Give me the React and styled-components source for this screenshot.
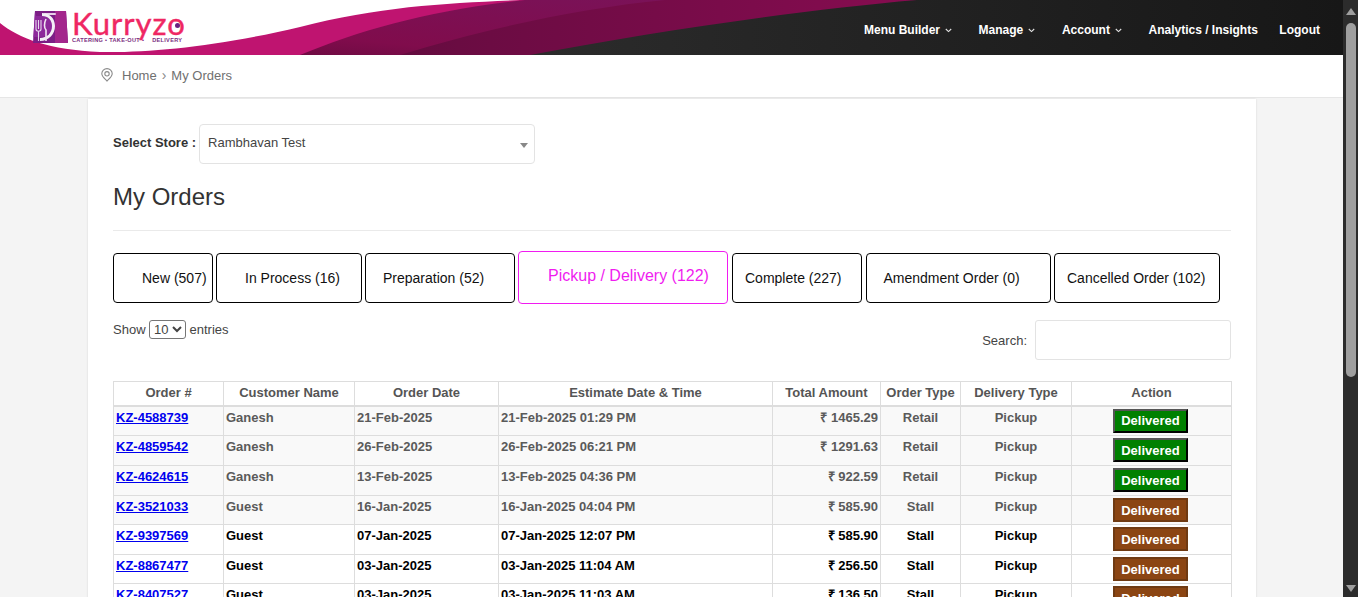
import React from 'react';
import styled, { createGlobalStyle } from 'styled-components';

const GlobalStyle = createGlobalStyle`
    html, body {
        margin: 0;
        padding: 0;
        height: 597px;
        overflow: hidden;
        font-family: "Liberation Sans", Arial, sans-serif;
        font-size: 13px;
        color: #333;
    }
    * {
        box-sizing: border-box;
    }
`;

const TABS = [
    { label: 'New (507)', width: 99.5, left: 28 },
    { label: 'In Process (16)', width: 145.5, left: 28 },
    { label: 'Preparation (52)', width: 149.5, left: 17 },
    { label: 'Pickup / Delivery (122)', width: 210, left: 29, active: true },
    { label: 'Complete (227)', width: 130.5, left: 12.5 },
    { label: 'Amendment Order (0)', width: 185, left: 17 },
    { label: 'Cancelled Order (102)', width: 166, left: 12 },
];

const COLUMNS = [110, 131, 144, 274, 108, 80, 111, 160];

const ORDERS = [
    { id: 'KZ-4588739', name: 'Ganesh', date: '21-Feb-2025', est: '21-Feb-2025 01:29 PM', amount: '₹ 1465.29', type: 'Retail', tone: 'green', seen: true, height: 30 },
    { id: 'KZ-4859542', name: 'Ganesh', date: '26-Feb-2025', est: '26-Feb-2025 06:21 PM', amount: '₹ 1291.63', type: 'Retail', tone: 'green', seen: true, height: 30 },
    { id: 'KZ-4624615', name: 'Ganesh', date: '13-Feb-2025', est: '13-Feb-2025 04:36 PM', amount: '₹ 922.59', type: 'Retail', tone: 'green', seen: true, height: 30 },
    { id: 'KZ-3521033', name: 'Guest', date: '16-Jan-2025', est: '16-Jan-2025 04:04 PM', amount: '₹ 585.90', type: 'Stall', tone: 'brown', seen: true, height: 29 },
    { id: 'KZ-9397569', name: 'Guest', date: '07-Jan-2025', est: '07-Jan-2025 12:07 PM', amount: '₹ 585.90', type: 'Stall', tone: 'brown', height: 30 },
    { id: 'KZ-8867477', name: 'Guest', date: '03-Jan-2025', est: '03-Jan-2025 11:04 AM', amount: '₹ 256.50', type: 'Stall', tone: 'brown', height: 29 },
    { id: 'KZ-8407527', name: 'Guest', date: '03-Jan-2025', est: '03-Jan-2025 11:03 AM', amount: '₹ 136.50', type: 'Stall', tone: 'brown', height: 30 },
];

function HeaderWave() {
    return (
        <WaveSvg viewBox="0 0 1343 55" preserveAspectRatio="none">
            <defs>
                <linearGradient id="darkBase" x1="0" x2="1" y1="0" y2="0">
                    <stop offset="0.35" stopColor="#2d2d2d" />
                    <stop offset="1" stopColor="#171717" />
                </linearGradient>
                <linearGradient id="plumLayer" x1="0" x2="1" y1="0" y2="0">
                    <stop offset="0" stopColor="#380828" />
                    <stop offset="0.5" stopColor="#6a0c42" />
                    <stop offset="1" stopColor="#860c50" />
                </linearGradient>
                <linearGradient id="wineLayer" x1="0" x2="1" y1="1" y2="0">
                    <stop offset="0" stopColor="#5a0a38" />
                    <stop offset="0.4" stopColor="#800c4c" />
                    <stop offset="1" stopColor="#7a1258" />
                </linearGradient>
            </defs>
            <rect width="1343" height="55" fill="url(#darkBase)" />
            <path d="M0,0 H917 C800,10 650,32 530,55 H0 Z" fill="url(#plumLayer)" />
            <path d="M0,0 H665 C580,8 480,30 400,55 H0 Z" fill="url(#wineLayer)" />
            <path d="M0,0 H525 C430,10 360,30 300,55 H0 Z" fill="#bf1470" />
            <path d="M0,0 H520 C450,3 380,6 300,27 C220,46 150,53 100,52 C50,50 18,38 0,23 Z" fill="#ffffff" />
        </WaveSvg>
    );
}

function BagIcon() {
    return (
        <svg width="35" height="33" viewBox="0 0 35 33">
            <path d="M2,1 H33 L35,33 H0 Z" fill="#7c1e86" />
            <path d="M22,1 H33 L35,33 H22 Z" fill="#a3268c" />
            <rect x="11" y="3" width="12" height="2" rx="1" fill="#e8cfe8" />
            <path d="M0,33 V27 H7 C15,27 19,21 19,16 C19,10 15,6 9,6 H3 L2,1 Z" fill="#8d2a9b" />
            <path d="M9,6 C15,6 19,10 19,16 C19,23 14,28 7,28 V31 C16,31 22,24 22,16 C22,8 16,3 9,3 Z" fill="#f4f0f6" />
            <path d="M3,10 V19 M5.5,10 V19 M8,10 V19 M3,19 C3,22 8,22 8,19 M5.5,21 V31" stroke="#e7d9ee" strokeWidth="1.1" fill="none" />
            <path d="M13,9 C11,13 11,18 13,20 V31" stroke="#f0e4f2" strokeWidth="1.6" fill="none" />
        </svg>
    );
}

function PinIcon() {
    return (
        <PinSvg width="12" height="14" viewBox="0 0 12 14" fill="none" stroke="#8a8a8a" strokeWidth="1.1">
            <path d="M6,13 C3.6,10.6 0.8,8.6 0.8,5.8 A5.2,5.2 0 0 1 11.2,5.8 C11.2,8.6 8.4,10.6 6,13 Z" />
            <circle cx="6" cy="5.8" r="2.2" />
        </PinSvg>
    );
}

function Chevron() {
    return (
        <ChevronSvg width="7" height="5" viewBox="0 0 7 5" fill="none" stroke="#e4e4e4" strokeWidth="1.1">
            <path d="M0.8,1 L3.5,3.6 L6.2,1" />
        </ChevronSvg>
    );
}

export default function App() {
    return (
        <Root>
            <GlobalStyle />
            <Page>
                <Header>
                    <HeaderWave />
                    <Logo>
                        <BagIcon />
                        <LogoWords>
                            <LogoName>Kurryzo</LogoName>
                            <LogoTag>
                                CATERING • TAKE-OUT •
                                <LogoTagEnd>DELIVERY</LogoTagEnd>
                            </LogoTag>
                        </LogoWords>
                    </Logo>
                    <Nav>
                        <NavItem>Menu Builder<Chevron /></NavItem>
                        <NavItem>Manage<Chevron /></NavItem>
                        <NavItem>Account<Chevron /></NavItem>
                        <NavItem>Analytics / Insights</NavItem>
                        <NavItem $last>Logout</NavItem>
                    </Nav>
                </Header>

                <Breadcrumb>
                    <PinIcon />
                    <Crumb>Home</Crumb>
                    <CrumbSep>›</CrumbSep>
                    <Crumb>My Orders</Crumb>
                </Breadcrumb>

                <Card>
                    <StoreRow>
                        <StoreLabel>Select Store :</StoreLabel>
                        <StoreSelect>Rambhavan Test</StoreSelect>
                    </StoreRow>

                    <Title>My Orders</Title>

                    <TabRow>
                        {TABS.map((tab) => (
                            <Tab key={tab.label} $width={tab.width} $left={tab.left} $active={tab.active}>
                                {tab.label}
                            </Tab>
                        ))}
                    </TabRow>

                    <Controls>
                        <ShowEntries>
                            Show
                            <EntriesSelect defaultValue="10">
                                <option value="10">10</option>
                                <option value="25">25</option>
                                <option value="50">50</option>
                            </EntriesSelect>
                            entries
                        </ShowEntries>
                        <SearchBox>
                            Search:
                            <SearchInput type="text" />
                        </SearchBox>
                    </Controls>

                    <OrdersTable>
                        <colgroup>
                            {COLUMNS.map((w, key) => <col key={key} width={w} />)}
                        </colgroup>
                        <thead>
                            <tr>
                                <HeadCell>Order #</HeadCell>
                                <HeadCell>Customer Name</HeadCell>
                                <HeadCell>Order Date</HeadCell>
                                <HeadCell>Estimate Date &amp; Time</HeadCell>
                                <HeadCell>Total Amount</HeadCell>
                                <HeadCell>Order Type</HeadCell>
                                <HeadCell>Delivery Type</HeadCell>
                                <HeadCell>Action</HeadCell>
                            </tr>
                        </thead>
                        <tbody>
                            {ORDERS.map((el) => (
                                <OrderRow key={el.id} $seen={el.seen} $height={el.height}>
                                    <Cell><OrderLink href="#">{el.id}</OrderLink></Cell>
                                    <Cell>{el.name}</Cell>
                                    <Cell>{el.date}</Cell>
                                    <Cell>{el.est}</Cell>
                                    <Cell $align="right">{el.amount}</Cell>
                                    <Cell $align="center">{el.type}</Cell>
                                    <Cell $align="center">Pickup</Cell>
                                    <Cell $align="center">
                                        <StatusButton $tone={el.tone}>Delivered</StatusButton>
                                    </Cell>
                                </OrderRow>
                            ))}
                        </tbody>
                    </OrdersTable>
                </Card>
            </Page>

            <ScrollTrack>
                <ScrollArrow viewBox="0 0 10 8"><path d="M5,0 L10,7 H0 Z" fill="#9f9f9f" /></ScrollArrow>
                <ScrollThumb />
                <ScrollArrow $bottom viewBox="0 0 10 8"><path d="M0,0 H10 L5,7 Z" fill="#9f9f9f" /></ScrollArrow>
            </ScrollTrack>
        </Root>
    );
}

const Root = styled.div`
    display: flex;
    width: 1358px;
    height: 597px;
    overflow: hidden;
`;
const Page = styled.div`
    flex: 1;
    min-width: 0;
    height: 597px;
    overflow: hidden;
    background: #f4f4f4;
`;

// 상단 헤더
const Header = styled.header`
    position: relative;
    display: flex;
    align-items: flex-start;
    justify-content: space-between;
    height: 55px;
    padding: 10px 23px 0 33px;
`;
const WaveSvg = styled.svg`
    position: absolute;
    top: 0;
    left: 0;
    width: 100%;
    height: 55px;
`;
const Logo = styled.div`
    position: relative;
    display: flex;
    gap: 4px;
`;
const LogoWords = styled.div`
    display: flex;
    flex-direction: column;
`;
const LogoName = styled.span`
    position: relative;
    height: 27px;
    font-family: "Lato", sans-serif;
    font-size: 31px;
    line-height: 27px;
    letter-spacing: 1px;
    -webkit-text-stroke: 0.4px #ef2763;
    color: #ef2763;
    &::after {
        content: '';
        position: absolute;
        right: 6px;
        top: 13px;
        width: 5px;
        height: 5px;
        border-radius: 50%;
        background: #6a2180;
    }
`;
const LogoTag = styled.span`
    font-size: 5.6px;
    font-weight: bold;
    line-height: 6px;
    white-space: nowrap;
    letter-spacing: 0.3px;
    color: #7b2d80;
`;
const LogoTagEnd = styled.span`
    margin-left: 8px;
`;
const Nav = styled.nav`
    position: relative;
    display: flex;
    align-items: center;
    height: 39px;
`;
const NavItem = styled.a`
    display: flex;
    align-items: center;
    margin-right: ${(props) => (props.$last ? '0' : '26.6px')};
    font-size: 12px;
    font-weight: bold;
    color: #fff;
    cursor: pointer;
    &:nth-child(4) {
        margin-right: 21.5px;
    }
`;
const ChevronSvg = styled.svg`
    margin-left: 5px;
    margin-top: 1px;
`;

// 브레드크럼
const Breadcrumb = styled.div`
    display: flex;
    align-items: center;
    height: 43px;
    padding: 0 0 2px 101px;
    background: #fff;
    border-bottom: 1px solid #e6e6e6;
    color: #777;
`;
const PinSvg = styled.svg`
    margin-right: 9px;
`;
const Crumb = styled.span`
    font-size: 13px;
    color: #707070;
`;
const CrumbSep = styled.span`
    margin: 0 5px;
    font-size: 14px;
    color: #888;
`;

// 본문 카드
const Card = styled.main`
    width: 1168px;
    height: 520px;
    margin: 1px 0 0 88px;
    padding: 25px 25px 0;
    background: #fff;
    box-shadow: 0 0 2px rgba(0, 0, 0, 0.12);
`;
const StoreRow = styled.div`
    display: flex;
    align-items: center;
    gap: 3px;
`;
const StoreLabel = styled.label`
    margin-bottom: 4px;
    font-size: 13px;
    font-weight: bold;
    color: #333;
`;
const StoreSelect = styled.div`
    position: relative;
    width: 336px;
    height: 40px;
    padding: 10px 8px;
    border: 1px solid #e3e3e3;
    border-radius: 4px;
    font-size: 13px;
    line-height: 16px;
    color: #444;
    &::after {
        content: '';
        position: absolute;
        right: 6px;
        top: 18px;
        border-left: 4px solid transparent;
        border-right: 4px solid transparent;
        border-top: 5px solid #888;
    }
`;
const Title = styled.h2`
    margin: 19px 0 0;
    height: 48px;
    padding-top: 0;
    border-bottom: 1px solid #eaeaea;
    font-size: 24px;
    font-weight: normal;
    line-height: 28px;
    color: #333;
`;
const TabRow = styled.div`
    display: flex;
    align-items: center;
    gap: 3.5px;
    height: 53px;
    margin-top: 20px;
`;
const Tab = styled.button`
    width: ${(props) => props.$width}px;
    height: ${(props) => (props.$active ? '53px' : '50px')};
    padding: 0 0 ${(props) => (props.$active ? '3px' : '0')} ${(props) => props.$left}px;
    border: 1px solid ${(props) => (props.$active ? '#f01cf0' : '#000')};
    border-radius: 4px;
    background: #fff;
    font-family: inherit;
    font-size: ${(props) => (props.$active ? '16px' : '14px')};
    text-align: left;
    white-space: nowrap;
    color: ${(props) => (props.$active ? '#f01cf0' : '#111')};
`;
const Controls = styled.div`
    display: flex;
    align-items: flex-start;
    justify-content: space-between;
    margin-top: 16px;
    height: 61px;
`;
const ShowEntries = styled.label`
    display: flex;
    align-items: center;
    gap: 3.5px;
    height: 19px;
    font-size: 13px;
    color: #444;
`;
const EntriesSelect = styled.select`
    width: 37px;
    height: 19px;
    padding: 0;
    border: 1px solid #767676;
    border-radius: 3px;
    background: #fff;
    font-family: inherit;
    font-size: 13px;
    color: #444;
`;
const SearchBox = styled.label`
    display: flex;
    align-items: center;
    gap: 8px;
    font-size: 13px;
    color: #444;
`;
const SearchInput = styled.input`
    width: 196px;
    height: 40px;
    border: 1px solid #e3e3e3;
    border-radius: 3px;
    background: #fff;
`;

// 주문 테이블
const OrdersTable = styled.table`
    width: 1118px;
    table-layout: fixed;
    border-collapse: collapse;
    border: 1px solid #ddd;
`;
const HeadCell = styled.th`
    height: 24px;
    padding: 0 2px 2px;
    border: 1px solid #ddd;
    border-bottom: 2px solid #ddd;
    font-size: 13px;
    font-weight: bold;
    white-space: nowrap;
    color: #555;
`;
const OrderRow = styled.tr`
    height: ${(props) => props.$height}px;
    background: ${(props) => (props.$seen ? '#f9f9f9' : '#fff')};
    color: ${(props) => (props.$seen ? '#5a5a5a' : '#000')};
`;
const Cell = styled.td`
    padding: 2px 2px 0;
    border: 1px solid #ddd;
    font-size: 13px;
    font-weight: bold;
    line-height: 18px;
    vertical-align: top;
    white-space: nowrap;
    text-align: ${(props) => props.$align || 'left'};
`;
const OrderLink = styled.a`
    color: #0000ee;
    text-decoration: underline;
`;
const StatusButton = styled.button`
    display: block;
    width: 75px;
    height: 24px;
    margin: 0 0 0 39px;
    padding: 0;
    border: 2px solid;
    border-color: ${(props) => (props.$tone === 'green' ? '#555 #000 #000 #555' : '#6f3a12 #6f3a12 #6f3a12 #6f3a12')};
    background: ${(props) => (props.$tone === 'green' ? '#008000' : '#8b4513')};
    font-family: inherit;
    font-size: 13px;
    font-weight: bold;
    color: #fff;
`;

// 스크롤바
const ScrollTrack = styled.div`
    display: flex;
    flex-direction: column;
    align-items: center;
    flex: 0 0 15px;
    height: 597px;
    background: #2c2c2c;
`;
const ScrollArrow = styled.svg`
    width: 10px;
    height: 8px;
    margin-top: ${(props) => (props.$bottom ? '208px' : '8px')};
`;
const ScrollThumb = styled.div`
    width: 10px;
    height: 354px;
    margin-top: 7px;
    border-radius: 5px;
    background: #9f9f9f;
`;
